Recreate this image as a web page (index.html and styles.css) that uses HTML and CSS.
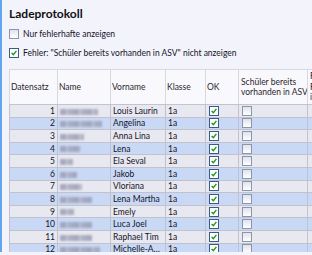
FILE: index.html
```html
<!DOCTYPE html>
<html>
<head>
<meta charset="utf-8">
<link rel="stylesheet" href="styles.css">
</head>
<body>
<div class="page">
  <h1 class="title">Ladeprotokoll</h1>
  <label class="opt"><span class="cb"></span>Nur fehlerhafte anzeigen</label>
  <label class="opt"><span class="cb on"><svg viewBox="0 0 10 10"><path d="M2 5 L4.2 7.2 L8 2.4" /></svg></span>Fehler: "Schüler bereits vorhanden in ASV" nicht anzeigen</label>
  <div class="grid-wrap">
    <table class="grid">
      <colgroup>
        <col class="c-ds"><col class="c-name"><col class="c-vn"><col class="c-kl"><col class="c-ok"><col class="c-sb"><col class="c-f">
      </colgroup>
      <thead>
        <tr><th>Datensatz</th><th>Name</th><th>Vorname</th><th>Klasse</th><th>OK</th><th class="nw">Schüler bereits<br>vorhanden in ASV</th><th class="nw">Fehler<br>Fehlertext<br>im Import</th></tr>
      </thead>
      <tbody>
        <tr><td class="num">1</td><td><span class="blur" style="width:38px"></span></td><td>Louis Laurin</td><td>1a</td><td class="box"><span class="cb on"><svg viewBox="0 0 10 10"><path d="M2 5 L4.2 7.2 L8 2.4" /></svg></span></td><td class="box"><span class="cb"></span></td><td></td></tr>
        <tr><td class="num">2</td><td><span class="blur" style="width:42px"></span></td><td>Angelina</td><td>1a</td><td class="box"><span class="cb on"><svg viewBox="0 0 10 10"><path d="M2 5 L4.2 7.2 L8 2.4" /></svg></span></td><td class="box"><span class="cb"></span></td><td></td></tr>
        <tr><td class="num">3</td><td><span class="blur" style="width:24px"></span></td><td>Anna Lina</td><td>1a</td><td class="box"><span class="cb on"><svg viewBox="0 0 10 10"><path d="M2 5 L4.2 7.2 L8 2.4" /></svg></span></td><td class="box"><span class="cb"></span></td><td></td></tr>
        <tr><td class="num">4</td><td><span class="blur" style="width:21px"></span></td><td>Lena</td><td>1a</td><td class="box"><span class="cb on"><svg viewBox="0 0 10 10"><path d="M2 5 L4.2 7.2 L8 2.4" /></svg></span></td><td class="box"><span class="cb"></span></td><td></td></tr>
        <tr><td class="num">5</td><td><span class="blur" style="width:13px"></span></td><td>Ela Seval</td><td>1a</td><td class="box"><span class="cb on"><svg viewBox="0 0 10 10"><path d="M2 5 L4.2 7.2 L8 2.4" /></svg></span></td><td class="box"><span class="cb"></span></td><td></td></tr>
        <tr><td class="num">6</td><td><span class="blur" style="width:17px"></span></td><td>Jakob</td><td>1a</td><td class="box"><span class="cb on"><svg viewBox="0 0 10 10"><path d="M2 5 L4.2 7.2 L8 2.4" /></svg></span></td><td class="box"><span class="cb"></span></td><td></td></tr>
        <tr><td class="num">7</td><td><span class="blur" style="width:22px"></span></td><td>Vloriana</td><td>1a</td><td class="box"><span class="cb on"><svg viewBox="0 0 10 10"><path d="M2 5 L4.2 7.2 L8 2.4" /></svg></span></td><td class="box"><span class="cb"></span></td><td></td></tr>
        <tr><td class="num">8</td><td><span class="blur" style="width:32px"></span></td><td>Lena Martha</td><td>1a</td><td class="box"><span class="cb on"><svg viewBox="0 0 10 10"><path d="M2 5 L4.2 7.2 L8 2.4" /></svg></span></td><td class="box"><span class="cb"></span></td><td></td></tr>
        <tr><td class="num">9</td><td><span class="blur" style="width:14px"></span></td><td>Emely</td><td>1a</td><td class="box"><span class="cb on"><svg viewBox="0 0 10 10"><path d="M2 5 L4.2 7.2 L8 2.4" /></svg></span></td><td class="box"><span class="cb"></span></td><td></td></tr>
        <tr><td class="num">10</td><td><span class="blur" style="width:32px"></span></td><td>Luca Joel</td><td>1a</td><td class="box"><span class="cb on"><svg viewBox="0 0 10 10"><path d="M2 5 L4.2 7.2 L8 2.4" /></svg></span></td><td class="box"><span class="cb"></span></td><td></td></tr>
        <tr><td class="num">11</td><td><span class="blur" style="width:32px"></span></td><td>Raphael Tim</td><td>1a</td><td class="box"><span class="cb on"><svg viewBox="0 0 10 10"><path d="M2 5 L4.2 7.2 L8 2.4" /></svg></span></td><td class="box"><span class="cb"></span></td><td></td></tr>
        <tr><td class="num">12</td><td><span class="blur" style="width:40px"></span></td><td>Michelle-Angelina</td><td>1a</td><td class="box"><span class="cb on"><svg viewBox="0 0 10 10"><path d="M2 5 L4.2 7.2 L8 2.4" /></svg></span></td><td class="box"><span class="cb"></span></td><td></td></tr>
      </tbody>
    </table>
  </div>
</div>
</body>
</html>
```
FILE: styles.css
```css
html, body {
  margin: 0;
  padding: 0;
  background: #f3f3fb;
}
body {
  width: 312px;
  height: 255px;
  overflow: hidden;
  font-family: Lato, "Noto Sans", sans-serif;
  font-size: 8.5px;
  color: #14142a;
}
.page {
  height: 252px;
  border-left: 2px solid #62a6ee;
  padding-left: 7px;
  display: flex;
  flex-direction: column;
  overflow: hidden;
}
.title {
  margin: 6px 0 0 0;
  font-size: 12px;
  line-height: 15px;
  font-weight: bold;
  color: #111;
}
.opt {
  display: flex;
  align-items: center;
  gap: 4px;
  height: 19px;
  line-height: 12px;
  white-space: nowrap;
  flex: none;
}
.opt:first-of-type { margin-top: 3px; }
.cb {
  box-sizing: border-box;
  display: inline-block;
  width: 10px;
  height: 10px;
  border: 1px solid #8a96ac;
  background: linear-gradient(#dfe3ea, #ffffff);
  position: relative;
  flex: none;
}
.cb.on {
  border-color: #3a5a8a;
  background: #fff;
}
.cb svg {
  position: absolute;
  left: 0;
  top: 0;
  width: 8px;
  height: 8px;
}
.cb path {
  fill: none;
  stroke: #1a9a1a;
  stroke-width: 1.8;
}
.grid-wrap {
  margin-top: 7px;
  flex: 1;
  overflow: hidden;
}
.grid {
  border-collapse: collapse;
  table-layout: fixed;
  width: 360px;
}
.c-ds { width: 48px; }
.c-name { width: 53px; }
.c-vn { width: 55px; }
.c-kl { width: 40px; }
.c-ok { width: 33px; }
.c-sb { width: 69px; }
.c-f { width: 62px; }
.grid th {
  height: 34px;
  background: #f9f9fd;
  border: 1px solid #d8d8e2;
  border-bottom-color: #c4c4d0;
  text-align: left;
  font-weight: normal;
  padding: 0 1px;
  line-height: 10.5px;
  color: #2a1f2a;
  vertical-align: middle;
  overflow: hidden;
  white-space: normal;
}
.grid th.nw { white-space: nowrap; padding-left: 2px; }
.grid tbody tr { height: 12.6px; }
.grid td {
  padding: 0 2px;
  line-height: 10px;
  border: 1px solid #c2c2ce;
  white-space: nowrap;
  overflow: hidden;
  text-overflow: ellipsis;
  vertical-align: middle;
  color: #141428;
}
.grid tbody tr:nth-child(odd) td { background: #e8e8f0; }
.grid tbody tr:nth-child(even) td { background: #c9d9f5; }
.grid td.num { text-align: right; padding-right: 2px; }
.grid td.box { padding: 0 0 0 3px; line-height: 0; }
.grid td .cb { vertical-align: middle; }
.blur {
  display: inline-block;
  height: 6px;
  vertical-align: middle;
  background: repeating-linear-gradient(90deg, #989bb2 0 6px, #b8bacc 6px 8px, #a0a3b8 8px 13px);
  filter: blur(1px);
  opacity: 0.8;
}
```
